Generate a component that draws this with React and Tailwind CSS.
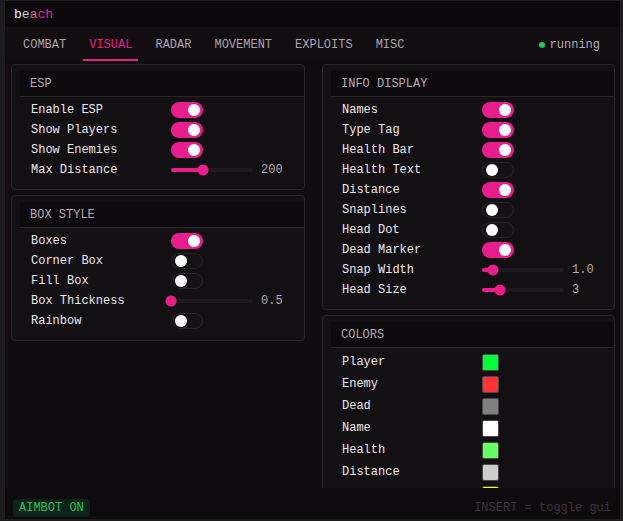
import { useState } from "react";

const PINK = "bg-[#e91e8c]";

function Toggle({ on }) {
  return (
    <div
      className={`w-8 h-4 rounded-full flex items-center px-[3px] ${
        on ? `${PINK} justify-end` : "bg-[#151215] border border-[#2a2428] justify-start"
      }`}
    >
      <div className="w-3 h-3 rounded-full bg-white" />
    </div>
  );
}

function Slider({ pct, value }) {
  return (
    <div className="flex items-center">
      <div className="relative w-[82px] h-[4px] rounded-full bg-[#1e1a1d]">
        <div className={`h-[4px] rounded-full ${PINK}`} style={{ width: pct }} />
        <div
          className={`absolute top-1/2 w-[11px] h-[11px] -translate-y-1/2 -translate-x-1/2 rounded-full ${PINK}`}
          style={{ left: pct }}
        />
      </div>
      <span className="ml-[8px] text-[#b3abb2]">{value}</span>
    </div>
  );
}

function Row({ label, children, tall }) {
  return (
    <div className={`flex items-center ${tall ? "h-[22px]" : "h-5"}`}>
      <span className="pl-[11px] w-[151px] shrink-0 text-[#ebe7eb]">{label}</span>
      {children}
    </div>
  );
}

function Panel({ title, width, children }) {
  return (
    <div
      className="border border-[#2a2328] rounded bg-[#131013] pt-[6px] pl-2 pb-[9px] shrink-0"
      style={{ width }}
    >
      <div className="h-[26px] bg-[#0c0a0c] border-b border-[#2a2328] flex items-center pl-[10px] pt-[1px] text-[#b5aab3]">
        {title}
      </div>
      <div className="pt-[3px]">{children}</div>
    </div>
  );
}

const tabs = ["COMBAT", "VISUAL", "RADAR", "MOVEMENT", "EXPLOITS", "MISC"];

const colors = [
  ["Player", "bg-[#00ff33]"],
  ["Enemy", "bg-[#ff3333]"],
  ["Dead", "bg-[#808080]"],
  ["Name", "bg-[#ffffff]"],
  ["Health", "bg-[#66ff66]"],
  ["Distance", "bg-[#cccccc]"],
  ["Snaplines", "bg-[#ffff00]"],
];

export default function App() {
  const [tab, setTab] = useState("VISUAL");

  return (
    <div
      className="w-[623px] h-[521px] bg-[#1c1c1c] overflow-hidden text-[12px] leading-none"
      style={{ fontFamily: '"Liberation Mono", "DejaVu Sans Mono", monospace' }}
    >
      <div className="ml-1 w-[617px] h-[520px] border border-[#231d22] bg-[#100c10] flex flex-col">
        {/* title */}
        <div className="h-[26px] bg-[#0a080a] flex items-center pl-[9px] text-[13px] shrink-0">
          <span className="text-[#eeeeee]">b</span>
          <span className="text-[#d8d2d6]">e</span>
          <span className="text-[#d9609f]">a</span>
          <span className="text-[#e8288f]">ch</span>
        </div>

        {/* tabs */}
        <div className="h-[34px] bg-[#110d11] flex items-stretch pl-3 pr-5 gap-[11px] shrink-0">
          {tabs.map((t) => (
            <button
              key={t}
              onClick={() => setTab(t)}
              className={`px-1.5 flex items-center border-b-2 pt-[3px] ${
                t === tab ? "text-[#e91e8c] border-[#e91e8c]" : "text-[#aca4ab] border-transparent"
              }`}
            >
              {t}
            </button>
          ))}
          <div className="ml-auto flex items-center gap-[5px] pt-[1px]">
            <div className="w-[6px] h-[6px] rounded-full bg-[#22c55e]" />
            <span className="text-[#b3abb2]">running</span>
          </div>
        </div>

        {/* content */}
        <div className="flex-1 overflow-hidden flex gap-[17px] pl-[6px] pt-[3px]">
          <div className="flex flex-col gap-[5px]">
            <Panel title="ESP" width={294}>
              <Row label="Enable ESP"><Toggle on /></Row>
              <Row label="Show Players"><Toggle on /></Row>
              <Row label="Show Enemies"><Toggle on /></Row>
              <Row label="Max Distance"><Slider pct="39%" value="200" /></Row>
            </Panel>
            <Panel title="BOX STYLE" width={294}>
              <Row label="Boxes"><Toggle on /></Row>
              <Row label="Corner Box"><Toggle /></Row>
              <Row label="Fill Box"><Toggle /></Row>
              <Row label="Box Thickness"><Slider pct="0%" value="0.5" /></Row>
              <Row label="Rainbow"><Toggle /></Row>
            </Panel>
          </div>

          <div className="flex flex-col gap-[5px]">
            <Panel title="INFO DISPLAY" width={293}>
              <Row label="Names"><Toggle on /></Row>
              <Row label="Type Tag"><Toggle on /></Row>
              <Row label="Health Bar"><Toggle on /></Row>
              <Row label="Health Text"><Toggle /></Row>
              <Row label="Distance"><Toggle on /></Row>
              <Row label="Snaplines"><Toggle /></Row>
              <Row label="Head Dot"><Toggle /></Row>
              <Row label="Dead Marker"><Toggle on /></Row>
              <Row label="Snap Width"><Slider pct="14%" value="1.0" /></Row>
              <Row label="Head Size"><Slider pct="22%" value="3" /></Row>
            </Panel>
            <Panel title="COLORS" width={293}>
              {colors.map(([name, c]) => (
                <Row key={name} label={name} tall>
                  <div className={`w-[17px] h-[17px] rounded-[2px] border border-[#4a4a4a] ${c}`} />
                </Row>
              ))}
            </Panel>
          </div>
        </div>

        {/* footer */}
        <div className="h-[31px] bg-[#0e0b0e] flex items-end justify-between pl-2 pr-[9px] pb-[2px] shrink-0">
          <div className="h-[18px] px-[6px] flex items-center rounded bg-[#0d2318] text-[#22c55e]">
            AIMBOT ON
          </div>
          <span className="h-[18px] flex items-center text-[#3b343c]">INSERT = toggle gui</span>
        </div>
      </div>
    </div>
  );
}
